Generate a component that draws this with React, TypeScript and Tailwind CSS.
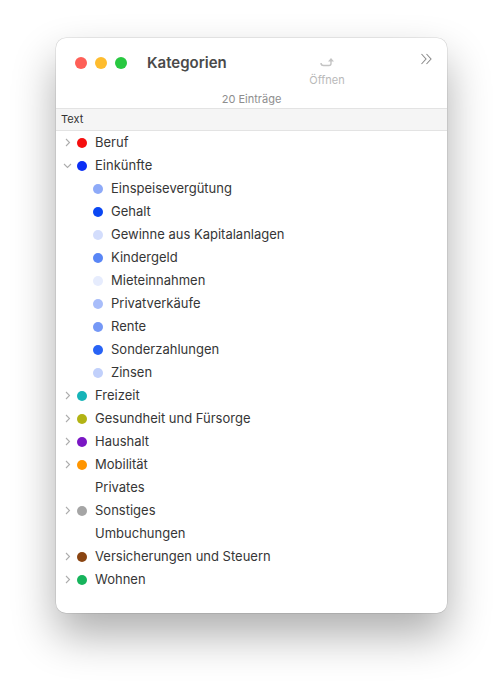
import React from 'react';

type Item = { name: string; color?: string; chevron?: 'right' | 'down'; child?: boolean };

const items: Item[] = [
  { name: 'Beruf', color: '#f50f0f', chevron: 'right' },
  { name: 'Einkünfte', color: '#0b2ff5', chevron: 'down' },
  { name: 'Einspeisevergütung', color: '#8eaaf8', child: true },
  { name: 'Gehalt', color: '#0a47f3', child: true },
  { name: 'Gewinne aus Kapitalanlagen', color: '#d3ddfc', child: true },
  { name: 'Kindergeld', color: '#5986f6', child: true },
  { name: 'Mieteinnahmen', color: '#e6ecfd', child: true },
  { name: 'Privatverkäufe', color: '#a8bdfa', child: true },
  { name: 'Rente', color: '#7598f6', child: true },
  { name: 'Sonderzahlungen', color: '#2863f5', child: true },
  { name: 'Zinsen', color: '#c1d0fb', child: true },
  { name: 'Freizeit', color: '#16b4b8', chevron: 'right' },
  { name: 'Gesundheit und Fürsorge', color: '#b2b314', chevron: 'right' },
  { name: 'Haushalt', color: '#7a17c4', chevron: 'right' },
  { name: 'Mobilität', color: '#ff9500', chevron: 'right' },
  { name: 'Privates' },
  { name: 'Sonstiges', color: '#a5a5a5', chevron: 'right' },
  { name: 'Umbuchungen' },
  { name: 'Versicherungen und Steuern', color: '#8a4512', chevron: 'right' },
  { name: 'Wohnen', color: '#17b45c', chevron: 'right' },
];

function Chevron({ dir }: { dir?: 'right' | 'down' }) {
  if (!dir) return <span className="w-[9px]" />;
  return (
    <svg className="w-[9px] h-[9px]" viewBox="0 0 9 9" fill="none" stroke="#adadad" strokeWidth="1.1">
      {dir === 'right' ? <path d="M3 1 L6.5 4.5 L3 8" /> : <path d="M1 3 L4.5 6.5 L8 3" />}
    </svg>
  );
}

function Row({ item }: { item: Item }) {
  if (item.child) {
    return (
      <div className="flex h-[23px] items-center pl-[37px]">
        <span className="h-[10px] w-[10px] rounded-full" style={{ backgroundColor: item.color }} />
        <span className="ml-[8px] text-[13px] text-[#363636]">{item.name}</span>
      </div>
    );
  }
  return (
    <div className="flex h-[23px] items-center pl-[7px]">
      <Chevron dir={item.chevron} />
      <span
        className="ml-[5px] h-[10px] w-[10px] rounded-full"
        style={{ backgroundColor: item.color ?? 'transparent' }}
      />
      <span className="ml-[8px] text-[13px] text-[#363636]">{item.name}</span>
    </div>
  );
}

export default function App() {
  return (
    <div className="h-[687px] w-full bg-white pl-[56px] pt-[38px] font-['Inter',sans-serif]">
      <div className="flex h-[575px] w-[391px] flex-col overflow-hidden rounded-[10px] bg-white shadow-[0_0_0_0.5px_rgba(0,0,0,0.14),0_22px_44px_rgba(0,0,0,0.32)]">
        {/* Toolbar */}
        <div className="flex h-[56px] items-start pl-[19px] pr-[14px] pt-[19px]">
          <div className="flex h-[12px] items-center">
            <div className="flex gap-2">
              <span className="h-3 w-3 rounded-full bg-[#fe5f57]" />
              <span className="h-3 w-3 rounded-full bg-[#febc2e]" />
              <span className="h-3 w-3 rounded-full bg-[#28c840]" />
            </div>
            <span className="ml-5 w-[150px] text-[15px] font-semibold leading-[20px] text-[#4a4a4a]">Kategorien</span>
          </div>
          <div className="flex w-[60px] flex-col items-center">
            <svg className="mt-[-1px] h-[12px] w-[18px]" viewBox="0 0 18 12" fill="none">
              <path d="M3 7 Q3 9.5 5.5 9.5 H11 Q13 9.5 13 7.5 V5" stroke="#c4c4c4" strokeWidth="1.4" />
              <path d="M10 5.5 L13 2 L16 5.5 Z" fill="#c4c4c4" />
            </svg>
            <span className="mt-[6px] text-[11px] leading-[13px] text-[#b9b9b9]">Öffnen</span>
          </div>
          <svg className="ml-auto mt-[-4px] h-[12px] w-[13px]" viewBox="0 0 13 12" fill="none" stroke="#8c8c8c" strokeWidth="1.1">
            <path d="M1.5 1 L6 6 L1.5 11" />
            <path d="M6.5 1 L11 6 L6.5 11" />
          </svg>
        </div>
        <div className="h-[14px] text-center text-[11px] leading-[10px] text-[#8e8e8e]">20 Einträge</div>

        {/* Column header */}
        <div className="flex h-[23px] items-center border-y border-[#e3e3e3] bg-[#f5f5f5] pl-[5px] text-[11px] text-[#333]">
          Text
        </div>

        {/* Outline */}
        <div className="flex flex-col">
          {items.map((it) => (
            <Row key={it.name} item={it} />
          ))}
        </div>
      </div>
    </div>
  );
}
